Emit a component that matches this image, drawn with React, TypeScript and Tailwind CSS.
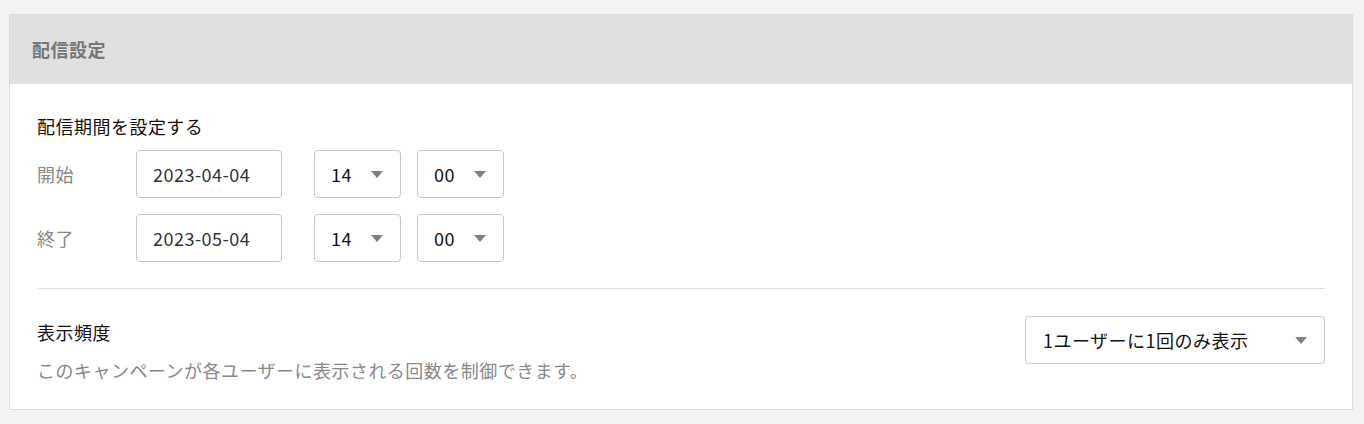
import { useState } from "react";

const font = { fontFamily: '"Noto Sans CJK JP", "Noto Sans", sans-serif' };

function Caret() {
  return (
    <svg width="12" height="7" viewBox="0 0 12 7" className="shrink-0">
      <path d="M0 0h12L6 7z" fill="#808080" />
    </svg>
  );
}

function SelectBox({ value, className }: { value: string; className: string }) {
  return (
    <div
      className={`flex h-[48px] items-center justify-between rounded-[4px] border border-[#c4c4c4] bg-white pl-[16px] pr-[17px] text-[18px] text-[#111] ${className}`}
    >
      <span>{value}</span>
      <Caret />
    </div>
  );
}

function PeriodRow({ label, date }: { label: string; date: string }) {
  const [hour] = useState("14");
  const [minute] = useState("00");
  return (
    <div className="flex items-center">
      <span className="w-[99px] text-[18px] text-[#888]">{label}</span>
      <div className="flex h-[48px] w-[146px] items-center rounded-[4px] border border-[#c4c4c4] pl-[16px] text-[18px] text-[#333]">
        {date}
      </div>
      <SelectBox value={hour} className="ml-[32px] w-[87px]" />
      <SelectBox value={minute} className="ml-[16px] w-[87px]" />
    </div>
  );
}

export default function App() {
  return (
    <div className="min-h-[424px] bg-[#f3f3f3] pt-[14px] pl-[9px] tracking-[0.03em]" style={font}>
      <div className="w-[1344px] border border-[#dcdcdc] bg-white">
        <div className="flex h-[69px] items-center bg-[#e0e0e0] px-[22px]">
          <h2 className="text-[18px] font-bold text-[#777]">配信設定</h2>
        </div>
        <div className="px-[27px] pt-[30px] pb-[27px]">
          <p className="text-[18px] leading-[24px] text-[#111]">配信期間を設定する</p>
          <div className="mt-[12px] flex flex-col gap-[16px]">
            <PeriodRow label="開始" date="2023-04-04" />
            <PeriodRow label="終了" date="2023-05-04" />
          </div>
          <div className="mt-[26px] flex items-start justify-between border-t border-[#e0e0e0] pt-[27px]">
            <div className="pt-[4px]">
              <p className="text-[18px] leading-[24px] text-[#111]">表示頻度</p>
              <p className="mt-[14px] text-[18px] leading-[24px] text-[#888]">
                このキャンペーンが各ユーザーに表示される回数を制御できます。
              </p>
            </div>
            <SelectBox value="1ユーザーに1回のみ表示" className="w-[300px] pl-[17px]" />
          </div>
        </div>
      </div>
    </div>
  );
}
